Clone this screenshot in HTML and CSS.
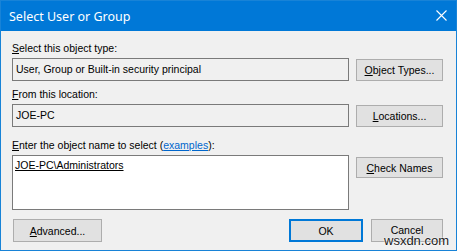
FILE: index.html
```html
<!DOCTYPE html>
<html>
<head>
<meta charset="utf-8">
<link rel="stylesheet" href="styles.css">
</head>
<body>
<div class="window">
  <div class="titlebar">
    <span class="title">Select User or Group</span>
    <svg class="close" width="11" height="11" viewBox="0 0 11 11"><path d="M0.5 0.5 L10.5 10.5 M10.5 0.5 L0.5 10.5" stroke="#fff" stroke-width="1.1" fill="none"/></svg>
  </div>
  <div class="content">
    <div class="label l1"><u>S</u>elect this object type:</div>
    <div class="row">
      <div class="field">User, Group or Built-in security principal</div>
      <div class="btn btn-top"><u>O</u>bject Types...</div>
    </div>
    <div class="label l2"><u>F</u>rom this location:</div>
    <div class="row">
      <div class="field">JOE-PC</div>
      <div class="btn btn-top"><u>L</u>ocations...</div>
    </div>
    <div class="label l3"><u>E</u>nter the object name to select (<span class="link">examples</span>):</div>
    <div class="row">
      <div class="area"><span class="resolved">JOE-PC\Administrators</span></div>
      <div class="btn btn-check"><u>C</u>heck Names</div>
    </div>
    <div class="bottom">
      <div class="btn btn-adv"><u>A</u>dvanced...</div>
      <div class="spacer"></div>
      <div class="btn btn-ok">OK</div>
      <div class="btn btn-cancel"><span class="cancel-text">Cancel</span></div>
    </div>
  </div>
  <div class="watermark">wsxdn.com</div>
</div>
</body>
</html>
```

FILE: styles.css
```css
html, body {
  margin: 0;
  padding: 0;
  background: #f0f0f0;
}
.window {
  position: relative;
  width: 457px;
  height: 251px;
  box-sizing: border-box;
  border: 1px solid #1883d7;
  background: #f0f0f0;
  font-family: "Liberation Sans", Arial, sans-serif;
  font-size: 10.5px;
  color: #000;
  overflow: hidden;
}
.titlebar {
  height: 30px;
  background: #0078d7;
  display: flex;
  align-items: center;
  justify-content: space-between;
  padding: 0 9px 0 8px;
}
.title {
  font-family: "Noto Sans", "Open Sans", sans-serif;
  font-size: 12.5px;
  color: #fff;
  padding-top: 1px;
}
.close {
  display: block;
  margin-top: -2px;
}
.content {
  padding: 10px 13px 8px 11px;
  display: flex;
  flex-direction: column;
}
.label {
  line-height: 15px;
  height: 15px;
  margin-bottom: 2px;
}
.l2 { margin-top: 6px; }
.l3 { margin-top: 11px; }
.link {
  color: #0066cc;
  text-decoration: underline;
}
.row {
  display: grid;
  grid-template-columns: 337px 87px;
  column-gap: 7px;
  align-items: start;
}
.field {
  height: 23px;
  box-sizing: border-box;
  border: 1px solid #7a7a7a;
  background: #f0f0f0;
  padding-left: 3px;
  line-height: 21px;
}
.area {
  height: 55px;
  box-sizing: border-box;
  border: 1px solid #7a7a7a;
  background: #fff;
  padding: 3px 2px;
  line-height: 13px;
}
.resolved {
  text-decoration: underline;
}
.btn {
  box-sizing: border-box;
  height: 22px;
  border: 1px solid #adadad;
  background: #e1e1e1;
  display: flex;
  align-items: center;
  justify-content: center;
}
.btn-top { margin-top: 1px; }
.btn-check { margin-top: 2px; height: 21px; }
.bottom {
  margin-top: 9px;
  display: flex;
  height: 23px;
}
.spacer { flex: 1; }
.btn-adv {
  width: 89px;
  margin-left: 1px;
  height: 23px;
}
.btn-ok {
  width: 74px;
  height: 23px;
  border: 2px solid #0078d7;
  margin-right: 8px;
}
.btn-cancel {
  width: 72px;
  height: 23px;
}
.cancel-text {
  margin-top: -2px;
}
.watermark {
  position: absolute;
  left: 383px;
  top: 233px;
  font-size: 13px;
  line-height: 14px;
  color: #1a1a1a;
  text-shadow: 0 0 2px #fff, 0 0 1px #fff;
}
```
